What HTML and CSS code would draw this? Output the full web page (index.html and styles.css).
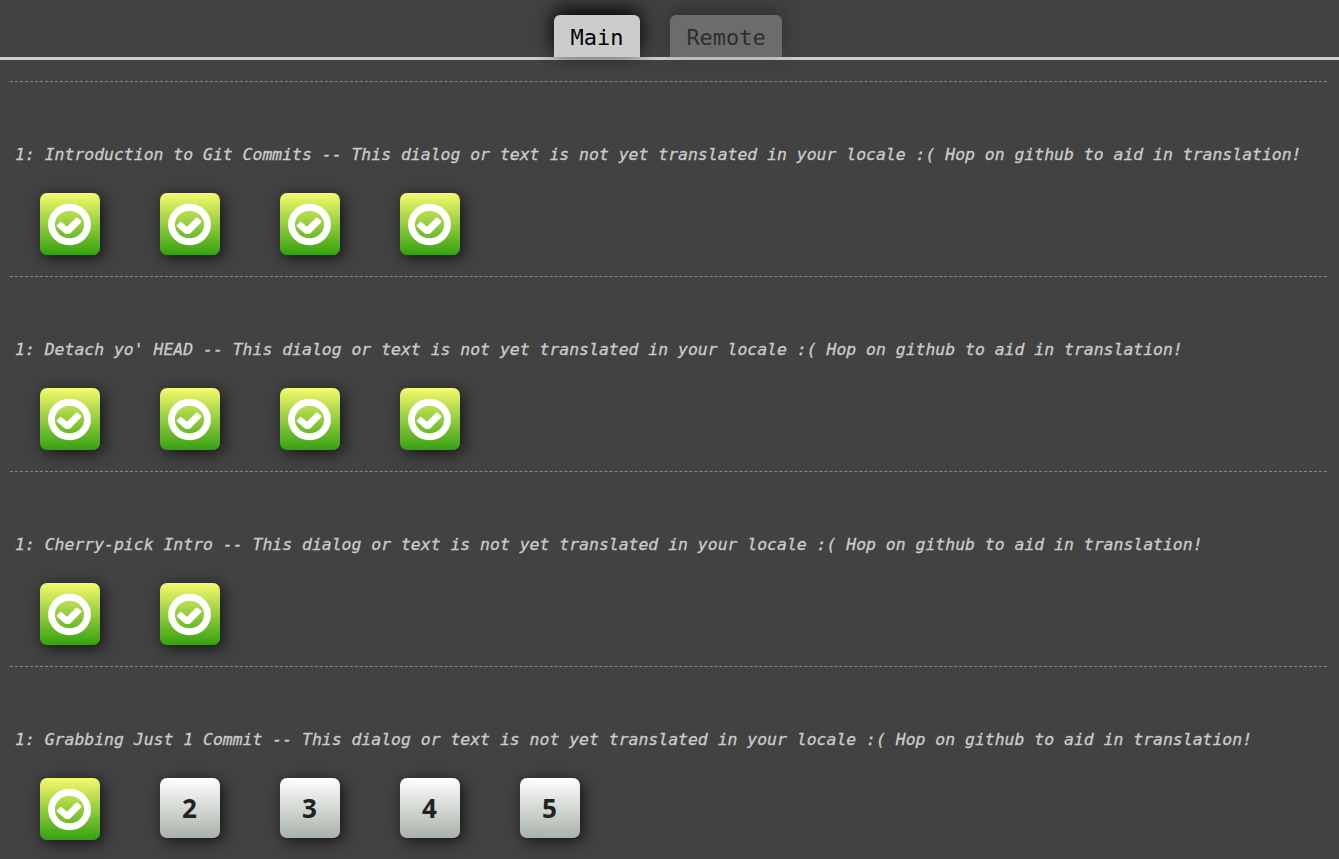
FILE: index.html
```html
<!DOCTYPE html>
<html lang="en">
<head>
<meta charset="utf-8">
<title>Levels</title>
<link rel="stylesheet" href="styles.css">
</head>
<body>
<svg class="defs" width="0" height="0" aria-hidden="true">
  <symbol id="check" viewBox="0 0 45 43">
    <ellipse cx="22.5" cy="21.5" rx="18" ry="17.2" fill="none" stroke="#fff" stroke-width="6.9"/>
    <path d="M10.1 22.1 L12.9 19.2 Q13.8 18.5 14.7 19.3 L20 23.7 L28.7 14.9 Q29.8 13.9 30.8 14.9 L34 17.6 Q34.9 18.6 34 19.6 L23.5 30.2 Q22.8 31 21.6 31 L19.4 31 Q18.3 31 17.5 30.2 L10.1 23.7 Q9.2 22.9 10.1 22.1Z" fill="#fff"/>
  </symbol>
</svg>
<nav class="tabs">
  <div class="tab active">Main</div>
  <div class="tab">Remote</div>
</nav>
<main class="levels">
  <section class="series">
    <p class="about">1: Introduction to Git Commits -- This dialog or text is not yet translated in your locale :( Hop on github to aid in translation!</p>
    <div class="icons">
      <div class="level solved"><svg><use href="#check"/></svg></div>
      <div class="level solved"><svg><use href="#check"/></svg></div>
      <div class="level solved"><svg><use href="#check"/></svg></div>
      <div class="level solved"><svg><use href="#check"/></svg></div>
    </div>
  </section>
  <section class="series">
    <p class="about">1: Detach yo' HEAD -- This dialog or text is not yet translated in your locale :( Hop on github to aid in translation!</p>
    <div class="icons">
      <div class="level solved"><svg><use href="#check"/></svg></div>
      <div class="level solved"><svg><use href="#check"/></svg></div>
      <div class="level solved"><svg><use href="#check"/></svg></div>
      <div class="level solved"><svg><use href="#check"/></svg></div>
    </div>
  </section>
  <section class="series">
    <p class="about">1: Cherry-pick Intro -- This dialog or text is not yet translated in your locale :( Hop on github to aid in translation!</p>
    <div class="icons">
      <div class="level solved"><svg><use href="#check"/></svg></div>
      <div class="level solved"><svg><use href="#check"/></svg></div>
    </div>
  </section>
  <section class="series">
    <p class="about">1: Grabbing Just 1 Commit -- This dialog or text is not yet translated in your locale :( Hop on github to aid in translation!</p>
    <div class="icons">
      <div class="level solved"><svg><use href="#check"/></svg></div>
      <div class="level">2</div>
      <div class="level">3</div>
      <div class="level">4</div>
      <div class="level">5</div>
    </div>
  </section>
</main>
</body>
</html>
```

FILE: styles.css
```css
* { box-sizing: border-box; }
body {
  margin: 0;
  height: 859px;
  overflow: hidden;
  background: #424242;
  font-family: "DejaVu Sans Mono", monospace;
}
.defs { display: none; }
.tabs {
  display: flex;
  justify-content: center;
  gap: 30px;
  height: 60px;
  padding: 15px 3px 0 0;
  border-bottom: 3px solid #ccc;
}
.tab {
  width: 112px;
  height: 42px;
  border-radius: 6px 6px 0 0;
  background: #ccc;
  color: #000;
  font-size: 21.93px;
  line-height: 45px;
  text-align: center;
  opacity: 0.3;
  box-shadow: 0 -5px 20px #000;
}
.tab.active { width: 86px; opacity: 1; }
.levels { padding: 21px 12px 0 10px; }
.series {
  height: 195px;
  border-top: 1px dashed #888;
  padding-top: 60px;
}
.about {
  margin: 0;
  padding-left: 5px;
  height: 51px;
  color: #ccc;
  font-size: 16.455px;
  font-style: italic;
  line-height: 26px;
  white-space: nowrap;
  -webkit-text-stroke: 0.3px #ccc;
}
.icons {
  display: flex;
  align-items: flex-start;
  gap: 60px;
  padding-left: 30px;
}
.level {
  width: 60px;
  height: 60px;
  padding-right: 1px;
  border-radius: 7px;
  background: linear-gradient(#fff, #a9b2a9);
  box-shadow: 3px 3px 15px rgba(0, 0, 0, 0.7);
  color: #222;
  font: bold 26px/61px "Open Sans", "Noto Sans", sans-serif;
  text-align: center;
}
.level.solved {
  height: 62px;
  padding: 10px 0 0 7px;
  background: linear-gradient(#f5f96d, #35a110);
}
.level svg {
  display: block;
  width: 45px;
  height: 43px;
}
```
